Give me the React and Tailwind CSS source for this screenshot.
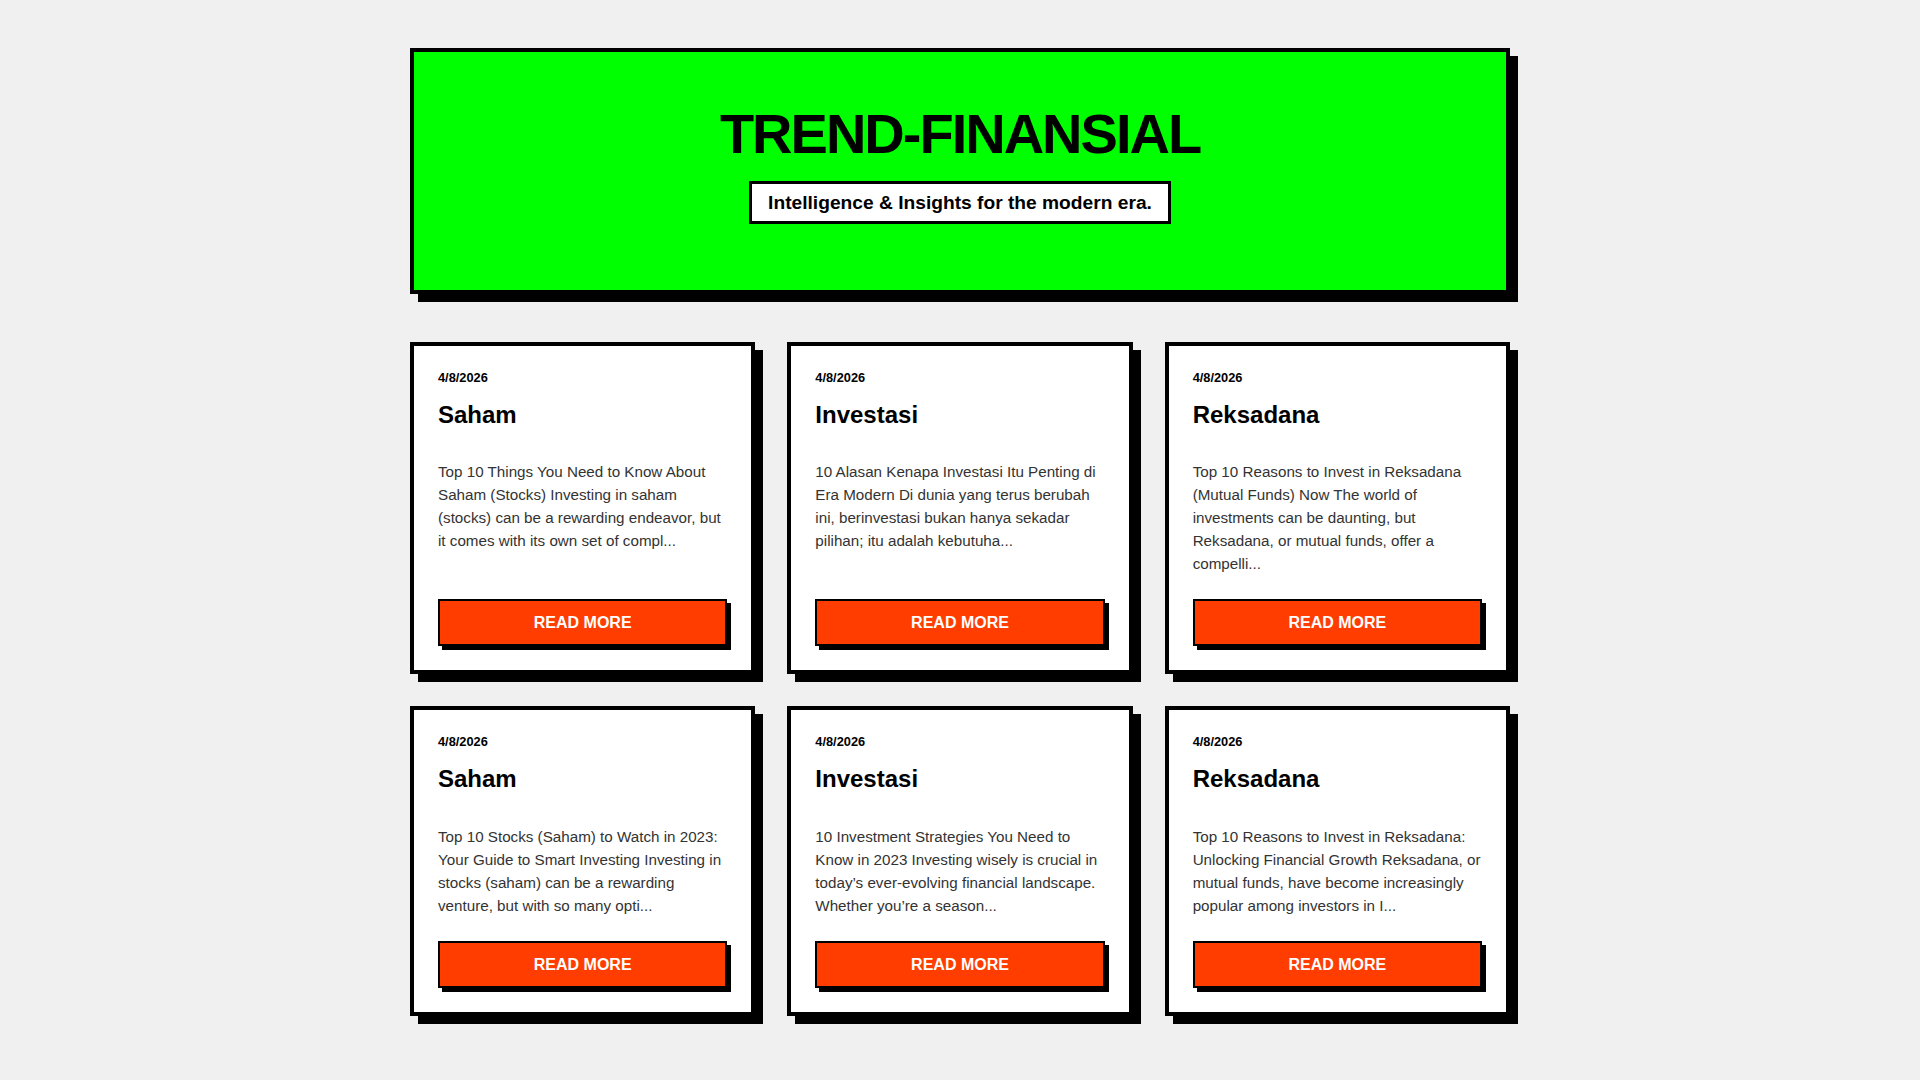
import React from 'react';

const posts = [
  {
    date: '4/8/2026',
    title: 'Saham',
    excerpt:
      'Top 10 Things You Need to Know About Saham (Stocks) Investing in saham (stocks) can be a rewarding endeavor, but it comes with its own set of compl...',
  },
  {
    date: '4/8/2026',
    title: 'Investasi',
    excerpt:
      '10 Alasan Kenapa Investasi Itu Penting di Era Modern Di dunia yang terus berubah ini, berinvestasi bukan hanya sekadar pilihan; itu adalah kebutuha...',
  },
  {
    date: '4/8/2026',
    title: 'Reksadana',
    excerpt:
      'Top 10 Reasons to Invest in Reksadana (Mutual Funds) Now The world of investments can be daunting, but Reksadana, or mutual funds, offer a compelli...',
  },
  {
    date: '4/8/2026',
    title: 'Saham',
    excerpt:
      'Top 10 Stocks (Saham) to Watch in 2023: Your Guide to Smart Investing Investing in stocks (saham) can be a rewarding venture, but with so many opti...',
  },
  {
    date: '4/8/2026',
    title: 'Investasi',
    excerpt:
      '10 Investment Strategies You Need to Know in 2023 Investing wisely is crucial in today\u2019s ever-evolving financial landscape. Whether you\u2019re a season...',
  },
  {
    date: '4/8/2026',
    title: 'Reksadana',
    excerpt:
      'Top 10 Reasons to Invest in Reksadana: Unlocking Financial Growth Reksadana, or mutual funds, have become increasingly popular among investors in I...',
  },
];

const PostCard = ({ post }) => (
  <article className="flex flex-col bg-white border-4 border-black shadow-[8px_8px_0_#000] p-6">
    <span className="block text-[12.8px] font-bold leading-[1.2] mb-[15px] text-black">{post.date}</span>
    <h2 className="text-2xl font-bold leading-[1.2] mb-[31px] text-black">{post.title}</h2>
    <p className="text-[15.2px] leading-[23px] text-[#333] mb-6">{post.excerpt}</p>
    <button className="mt-auto w-full bg-[#ff3d00] border-2 border-black shadow-[4px_4px_0_#000] text-white text-base font-bold uppercase py-[10px] leading-[23px]">
      Read More
    </button>
  </article>
);

const App = () => {
  return (
    <div className="min-h-screen bg-[#f0f0f0] font-['Liberation_Sans',Arial,sans-serif] text-black">
      <div className="max-w-[1100px] mx-auto pt-12 pb-12">
        {/* Header */}
        <header className="bg-[#00ff00] border-4 border-black shadow-[8px_8px_0_#000] pt-12 pb-[66px] text-center">
          <h1 className="text-[56px] font-bold leading-[1.2] tracking-[-2px] mb-[14px]">TREND-FINANSIAL</h1>
          <p className="inline-block bg-white border-[3px] border-black px-4 py-[7px] text-[19.2px] font-bold leading-[1.2]">
            Intelligence &amp; Insights for the modern era.
          </p>
        </header>

        {/* Posts */}
        <main className="grid grid-cols-3 gap-8 mt-12">
          {posts.map((post, i) => (
            <PostCard key={i} post={post} />
          ))}
        </main>
      </div>
    </div>
  );
};

export default App;
